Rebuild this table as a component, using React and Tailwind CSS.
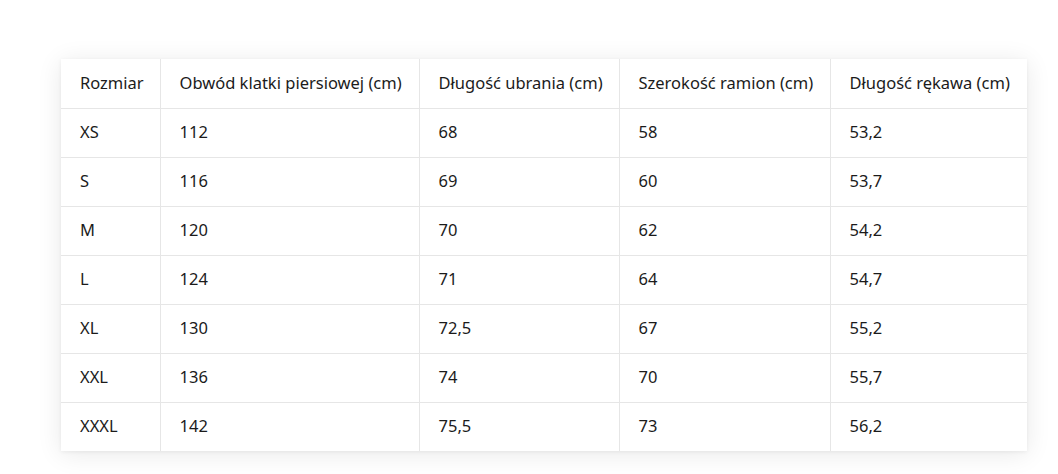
const headers = ['Rozmiar', 'Obwód klatki piersiowej (cm)', 'Długość ubrania (cm)', 'Szerokość ramion (cm)', 'Długość rękawa (cm)']
const widths = ['w-[99px]', 'w-[259px]', 'w-[200px]', 'w-[211px]', 'w-[197px]']

const rows = [
  ['XS', '112', '68', '58', '53,2'],
  ['S', '116', '69', '60', '53,7'],
  ['M', '120', '70', '62', '54,2'],
  ['L', '124', '71', '64', '54,7'],
  ['XL', '130', '72,5', '67', '55,2'],
  ['XXL', '136', '74', '70', '55,7'],
  ['XXXL', '142', '75,5', '73', '56,2'],
]

export default function App() {
  return (
    <div className="w-[1058px] h-[474px] bg-white overflow-hidden pt-[59px] pl-[61px]" style={{ fontFamily: '"Noto Sans", sans-serif' }}>
      <table className="table-fixed border-collapse bg-white shadow-[0_3px_24px_rgba(0,0,0,0.09),0_1px_4px_rgba(0,0,0,0.06)] text-[16.5px] text-[#1b1b1b]">
        <colgroup>
          {widths.map(w => <col key={w} className={w} />)}
        </colgroup>
        <thead>
          <tr className="h-[49px]">
            {headers.map((h, i) => (
              <th
                key={h}
                className={`text-left font-normal pl-[19px] border-b border-[#e6e6e6] ${i > 0 ? 'border-l' : ''}`}
              >
                {h}
              </th>
            ))}
          </tr>
        </thead>
        <tbody>
          {rows.map((r, ri) => (
            <tr key={r[0]} className="h-[49px]">
              {r.map((c, i) => (
                <td
                  key={i}
                  className={`pl-[19px] border-[#e6e6e6] ${ri < rows.length - 1 ? 'border-b' : ''} ${i > 0 ? 'border-l' : ''}`}
                >
                  {c}
                </td>
              ))}
            </tr>
          ))}
        </tbody>
      </table>
    </div>
  )
}
